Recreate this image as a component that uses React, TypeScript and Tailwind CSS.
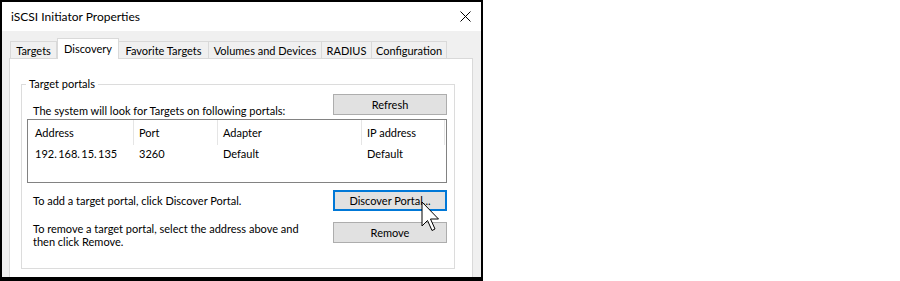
import React from "react";

const tabs = [
  { label: "Targets", w: "w-[47px]" },
  { label: "Discovery", w: "w-[62px]", active: true },
  { label: "Favorite Targets", w: "w-[90px]" },
  { label: "Volumes and Devices", w: "w-[113px]" },
  { label: "RADIUS", w: "w-[50px]" },
  { label: "Configuration", w: "w-[75px]" },
];

function Btn({ children, focused }: { children: React.ReactNode; focused?: boolean }) {
  return (
    <div
      className={
        "w-[114px] h-[21px] flex items-center justify-center bg-[#e1e1e1] shrink-0 " +
        (focused ? "border-2 border-[#0078d7]" : "border border-[#adadad]")
      }
    >
      {children}
    </div>
  );
}

export default function App() {
  return (
    <div className="relative w-[900px] h-[281px] bg-white text-[11px] leading-[16px] text-black font-['Lato',sans-serif] whitespace-nowrap overflow-hidden">
      <div className="w-[483px] h-[281px] border-l-2 border-r-2 border-t-2 border-b-4 border-black flex flex-col overflow-hidden">
        {/* title bar */}
        <div className="h-[29px] bg-white flex items-center justify-between pl-[9px] pr-[10px] shrink-0">
          <span className="text-[12px]">iSCSI Initiator Properties</span>
          <svg width="11" height="11" viewBox="0 0 11 11">
            <path d="M0.5 0.5 L10.5 10.5 M10.5 0.5 L0.5 10.5" stroke="#000" strokeWidth="1" fill="none" />
          </svg>
        </div>
        {/* body */}
        <div className="flex-1 bg-[#f0f0f0] pt-[7px] flex flex-col">
          <div className="relative z-10 -mb-px flex items-end ml-[8px] h-[21px]">
            {tabs.map((t) =>
              t.active ? (
                <div
                  key={t.label}
                  className={t.w + " h-[21px] bg-white border border-b-0 border-[#d9d9d9] flex justify-center pt-[2px]"}
                >
                  {t.label}
                </div>
              ) : (
                <div
                  key={t.label}
                  className={t.w + " h-[18px] bg-[#f0f0f0] border border-l-0 first:border-l border-[#d9d9d9] flex justify-center pt-[1px]"}
                >
                  {t.label}
                </div>
              )
            )}
          </div>
          <div className="flex-1 bg-white border border-b-0 border-[#d9d9d9] ml-[7px] mr-[8px]">
            <div className="relative mt-[25px] ml-[11px] w-[434px] h-[185px] border border-[#dcdcdc] flex flex-col">
              <span className="absolute top-[-9px] left-[4px] px-[3px] bg-white">Target portals</span>
              <div className="mt-[9px] flex items-end justify-between pl-[11px] pr-[7px]">
                <span className="mb-[-4px]">The system will look for Targets on following portals:</span>
                <Btn>Refresh</Btn>
              </div>
              <div className="mt-[4px] ml-[5px] mr-[7px] h-[64px] border border-[#828282] flex flex-col">
                <div className="flex h-[25px]">
                  <div className="w-[106px] border-r border-[#e5e5e5] pl-[7px] flex items-center">Address</div>
                  <div className="w-[84px] border-r border-[#e5e5e5] pl-[5px] flex items-center">Port</div>
                  <div className="w-[144px] border-r border-[#e5e5e5] pl-[5px] flex items-center">Adapter</div>
                  <div className="w-[83px] border-r border-[#e5e5e5] pl-[5px] flex items-center">IP address</div>
                </div>
                <div className="flex h-[17px] items-center">
                  <div className="w-[106px] pl-[7px]">192.{"\u2009"}168.{"\u2009"}15.{"\u2009"}135</div>
                  <div className="w-[84px] pl-[5px]">3260</div>
                  <div className="w-[144px] pl-[5px]">Default</div>
                  <div className="w-[83px] pl-[5px]">Default</div>
                </div>
              </div>
              <div className="mt-[7px] flex items-center justify-between pl-[11px] pr-[7px]">
                <span>To add a target portal, click Discover Portal.</span>
                <Btn focused>Discover Portal...</Btn>
              </div>
              <div className="mt-[11px] flex items-start justify-between pl-[11px] pr-[7px]">
                <div className="leading-[13px] flex flex-col">
                  <span>To remove a target portal, select the address above and</span>
                  <span>then click Remove.</span>
                </div>
                <Btn>Remove</Btn>
              </div>
            </div>
          </div>
        </div>
      </div>
      {/* mouse cursor */}
      <svg className="absolute left-[421px] top-[201px]" width="20" height="31" viewBox="0 0 20 31">
        <path
          d="M1 1 L1 25 L6.5 19.5 L11 29.5 L14 28 L9.5 18 L17.5 18 Z"
          fill="#fff"
          stroke="#000"
          strokeWidth="1"
          strokeLinejoin="miter"
        />
      </svg>
    </div>
  );
}
